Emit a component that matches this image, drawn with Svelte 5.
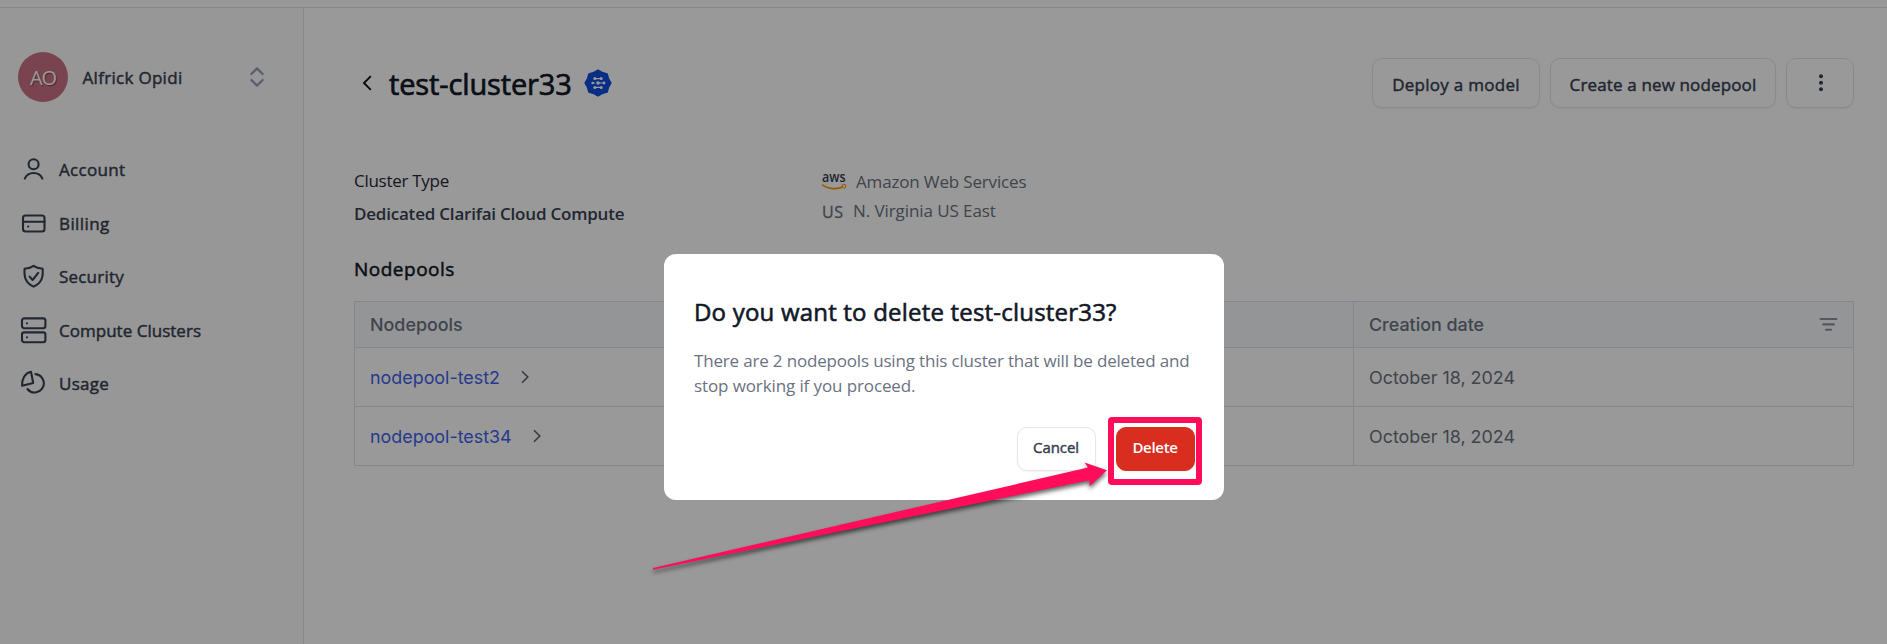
<script>
  const nav = [
    { label: 'Account', icon: 'user', ls: 0.3 },
    { label: 'Billing', icon: 'card', ls: 0.4 },
    { label: 'Security', icon: 'shield', ls: 0.2 },
    { label: 'Compute Clusters', icon: 'servers', ls: 0.02 },
    { label: 'Usage', icon: 'pie', ls: 0.25 }
  ];
  const pools = [
    { name: 'nodepool-test2', created: 'October 18, 2024' },
    { name: 'nodepool-test34', created: 'October 18, 2024' }
  ];
</script>

<div class="page">
  <div class="topbar"></div>
  <div class="body">
    <aside>
      <div class="user">
        <span class="avatar">AO</span>
        <span class="name">Alfrick Opidi</span>
        <svg class="updown" width="16" height="22" viewBox="0 0 16 22" fill="none" stroke="#969fb2" stroke-width="2.4" stroke-linecap="round" stroke-linejoin="round"><path d="M2.4 8 8 2.4 13.6 8M2.4 14 8 19.6 13.6 14" /></svg>
      </div>
      <nav>
        {#each nav as item}
          <div class="item">
            <svg width="27" height="27" viewBox="0 0 27 27" fill="none" stroke="#374151" stroke-width="2.1" stroke-linecap="round" stroke-linejoin="round">
              {#if item.icon === 'user'}
                <circle cx="13.6" cy="8.3" r="5" /><path d="M4.8 22.6C6.4 19 9.7 17 13.6 17S20.9 19 22.4 22.6" />
              {:else if item.icon === 'card'}
                <rect x="3" y="5.5" width="21.5" height="16" rx="2.5" /><path d="M3 11.8h21.5" /><circle cx="8.2" cy="16.6" r=".5" stroke-width="1.2" />
              {:else if item.icon === 'shield'}
                <path d="M13.6 2.8C11.2 4.5 7.8 5.3 4.6 5.7 4 13.5 5 19.6 13.6 23.6 22.2 19.6 23.3 13.5 22.6 5.7 19.4 5.3 16 4.5 13.6 2.8Z" /><path d="M9.6 13.6 12.6 17 18.2 9.8" />
              {:else if item.icon === 'servers'}
                <rect x="2" y="1.4" width="23.4" height="9.8" rx="2.2" /><rect x="2" y="15.4" width="23.4" height="9.8" rx="2.2" /><circle cx="7" cy="6.3" r=".5" stroke-width="1.2" /><circle cx="7" cy="20.3" r=".5" stroke-width="1.2" />
              {:else}
                <path d="M11 1.8C5 3 1.6 9 2.1 15.8L13.2 13Z" /><path d="M15.4 4.1A9.2 9.2 0 1 1 7.4 19" />
              {/if}
            </svg>
            <span style:letter-spacing="{item.ls}px">{item.label}</span>
          </div>
        {/each}
      </nav>
    </aside>

    <main>
      <header>
        <svg class="back" width="12" height="18" viewBox="0 0 12 18" fill="none" stroke="#111" stroke-width="1.9"><path d="M9.8 2.2 3 9l6.8 6.8" /></svg>
        <h1>test-cluster33</h1>
        <svg class="badge" width="28" height="28" viewBox="0 0 28 28">
          <path fill="#0f4ddd" stroke="#0f4ddd" stroke-width="2" stroke-linejoin="round" d="M14 1.4 18.2 3.8 22.9 5.1 24.2 9.8 26.6 14 24.2 18.2 22.9 22.9 18.2 24.2 14 26.6 9.8 24.2 5.1 22.9 3.8 18.2 1.4 14 3.8 9.8 5.1 5.1 9.8 3.8Z" />
          <g stroke="#fff" stroke-width="1.2"><path d="M10.5 9.6h7M8.5 14h2.6M14 14h6M10.5 18.4h7" /></g>
          <g fill="#fff"><circle cx="10.8" cy="9.6" r="1.5" /><circle cx="17.2" cy="9.6" r="1.5" /><circle cx="8.6" cy="14" r="1.3" /><circle cx="14" cy="14" r="1.8" /><circle cx="20" cy="14" r="1.4" /><circle cx="10.8" cy="18.4" r="1.5" /><circle cx="17.2" cy="18.4" r="1.5" /></g>
        </svg>
        <div class="actions">
          <button class="deploy">Deploy a model</button>
          <button class="create">Create a new nodepool</button>
          <button class="more" aria-label="More"><svg width="6" height="18" viewBox="0 0 6 18" fill="#374151"><circle cx="3" cy="2.2" r="2" /><circle cx="3" cy="8.7" r="2" /><circle cx="3" cy="15.2" r="2" /></svg></button>
        </div>
      </header>

      <section class="info">
        <div class="kind">
          <span class="label">Cluster Type</span>
          <strong>Dedicated Clarifai Cloud Compute</strong>
        </div>
        <div class="cloud">
          <div class="line">
            <svg class="aws" width="26" height="18" viewBox="0 0 26 18" overflow="visible">
              <text x="1" y="8.9" textLength="23.5" lengthAdjust="spacingAndGlyphs" font-family="Open Sans, sans-serif" font-weight="600" font-size="14" fill="#333d4c">aws</text>
              <path d="M1 11.6C7 16.4 17 16.6 22.4 13.6" fill="none" stroke="#f90" stroke-width="1.8" /><path d="M20.6 12.2c1.6-.7 3.4-.8 4-.3.4.9-.2 2.9-1.4 4" fill="none" stroke="#f90" stroke-width="1.1" />
            </svg>
            <span class="aws-name">Amazon Web Services</span>
          </div>
          <div class="line region"><span class="us">US</span><span class="place">N. Virginia US East</span></div>
        </div>
      </section>

      <h2>Nodepools</h2>
      <div class="table">
        <div class="row head">
          <div class="cell">Nodepools</div>
          <div class="cell date">Creation date
            <svg width="19" height="15" viewBox="0 0 19 15" stroke="#8b93a1" stroke-width="2.1" stroke-linecap="round"><path d="M1.6 2h15.8M4.3 7.4h10.6M6.9 12.8h5.2" /></svg>
          </div>
        </div>
        {#each pools as pool}
          <div class="row">
            <div class="cell link">{pool.name}
              <svg width="10" height="14" viewBox="0 0 10 14" fill="none" stroke="#5b6170" stroke-width="1.6"><path d="M2 1.2 7.8 7 2 12.8" /></svg>
            </div>
            <div class="cell date">{pool.created}</div>
          </div>
        {/each}
      </div>
    </main>
  </div>

  <div class="overlay">
    <div class="modal" role="dialog">
      <h3>Do you want to delete test-cluster33?</h3>
      <p><span class="p1">There are 2 nodepools using this cluster that will be deleted and</span><br /><span class="p2">stop working if you proceed.</span></p>
      <div class="buttons">
        <button class="cancel">Cancel</button>
        <button class="delete">Delete</button>
      </div>
    </div>
  </div>

  <svg class="marks" width="1887" height="644" viewBox="0 0 1887 644">
    <rect x="1111" y="420" width="88" height="62" rx="1" fill="none" stroke="#ff0d5b" stroke-width="6" />
    <path class="arrow" fill="#ff0d5b" d="M653 568 L1088 467.6 L1084.5 462.6 L1107 470.3 L1089.6 486.3 L1089.4 480.2 L653 569.8Z" />
  </svg>
</div>

<style>
  :global(body) { overflow: hidden; }
  .page { width: 1887px; height: 644px; background: #fff; font-family: 'Open Sans', 'Noto Sans', sans-serif; font-size: 17px; position: relative; overflow: hidden; display: flex; flex-direction: column; }
  .page * { box-sizing: border-box; }
  span, strong, button, h1, h2, h3, .cell { white-space: nowrap; }
  h1, h2, h3, p { margin: 0; font-weight: 400; }
  .topbar { height: 8px; border-bottom: 1px solid #e2e5ea; background: #fdfdfd; flex: none; }
  .body { display: flex; flex: 1; }
  aside { width: 304px; border-right: 1px solid #e2e5ea; background: #fcfcfc; padding-top: 44px; }
  .user { display: flex; align-items: center; height: 50px; padding: 0 38px 0 18px; }
  .avatar { width: 50px; height: 50px; border-radius: 50%; background: #cb7085; color: #fff; font-size: 20px; line-height: 51px; text-align: center; letter-spacing: -1px; text-shadow: 1px 1px 1px #0006; }
  .name { margin-left: 14.5px; color: #374151; letter-spacing: .3px; }
  .name, .item, .actions button, .cancel { -webkit-text-stroke: .45px currentColor; }
  .updown { margin-left: auto; }
  nav { padding: 41px 0 0 20px; }
  .item { display: flex; align-items: center; height: 53.5px; color: #374151; }
  .item span { margin-left: 12px; }
  main { flex: 1; padding: 50px 33px 0 50px; }
  header { display: flex; align-items: center; height: 50px; }
  .back { margin-left: 7px; }
  h1 { font-size: 29px; line-height: 40px; color: #111827; margin: 2px 0 0 16px; width: 195px; letter-spacing: -.13px; -webkit-text-stroke: .7px currentColor; }
  .actions { display: flex; gap: 10px; margin-left: auto; }
  button { font: 400 17px/1 'Open Sans', sans-serif; color: #374151; background: #fff; border: 1px solid #e5e7eb; border-radius: 10px; box-shadow: 0 1px 2px #0000000d; padding: 0; }
  .actions button { height: 50px; display: flex; align-items: center; justify-content: center; padding-top: 2px; }
  .deploy { width: 168px; letter-spacing: .28px; }
  .create { width: 226px; letter-spacing: .14px; }
  .actions .more { width: 68px; padding: 0 0 0 1px; }
  .info { display: flex; height: 66px; margin-top: 56px; }
  .kind { width: 467px; display: flex; flex-direction: column; line-height: 33px; }
  .label { color: #1f2937; letter-spacing: -.28px; }
  strong { font-weight: 600; color: #374151; letter-spacing: -.21px; }
  .cloud { padding-top: 3px; color: #6b7280; line-height: 29px; }
  .line { display: flex; align-items: center; height: 29px; }
  .aws-name { margin-left: 9px; letter-spacing: -.16px; }
  .us { width: 32px; padding-left: 1px; font-size: 16px; letter-spacing: .6px; padding-top: 4px; -webkit-text-stroke: .3px currentColor; }
  .place { letter-spacing: -.08px; }
  h2 { font-size: 19px; line-height: 28px; color: #111827; margin: 25px 0 18px; letter-spacing: .5px; -webkit-text-stroke: .5px currentColor; }
  .table { width: 1500px; border: 1px solid #dfe2e8; font: 400 17.9px Inter, sans-serif; color: #6b7280; }
  .row { display: grid; grid-template-columns: 998px 1fr; height: 59px; border-top: 1px solid #dfe2e8; }
  .row.head { height: 45px; border-top: 0; background: #f6f8fb; font-weight: 500; }
  .cell { display: flex; align-items: center; padding: 0 15px; }
  .date { border-left: 1px solid #dfe2e8; }
  .head svg { margin-left: auto; }
  .link { color: #4263eb; }
  .link svg { margin-left: 20px; }
  .overlay { position: absolute; inset: 0; background: #0006; display: flex; align-items: flex-start; justify-content: center; padding-top: 254px; }
  .modal { width: 560px; height: 246px; background: #fff; border-radius: 12px; padding: 40px 29px 0 30.5px; }
  h3 { font-size: 24px; line-height: 36px; color: #111827; letter-spacing: .2px; -webkit-text-stroke: .6px currentColor; }
  p { margin-top: 18px; line-height: 25px; color: #6b7280; }
  .p1 { letter-spacing: -.175px; }
  .p2 { letter-spacing: -.11px; }
  .buttons { display: flex; justify-content: flex-end; gap: 20px; margin-top: 28.5px; }
  .buttons button { font-size: 15px; height: 44px; width: 79px; padding-bottom: 2px; letter-spacing: -.1px; }
  .buttons .delete { background: #d92d20; border-color: #d92d20; color: #fff; font-weight: 600; letter-spacing: -.3px; }
  .marks { position: absolute; left: 0; top: 0; }
  .arrow { filter: drop-shadow(0 3px 2px #0009); }
</style>
